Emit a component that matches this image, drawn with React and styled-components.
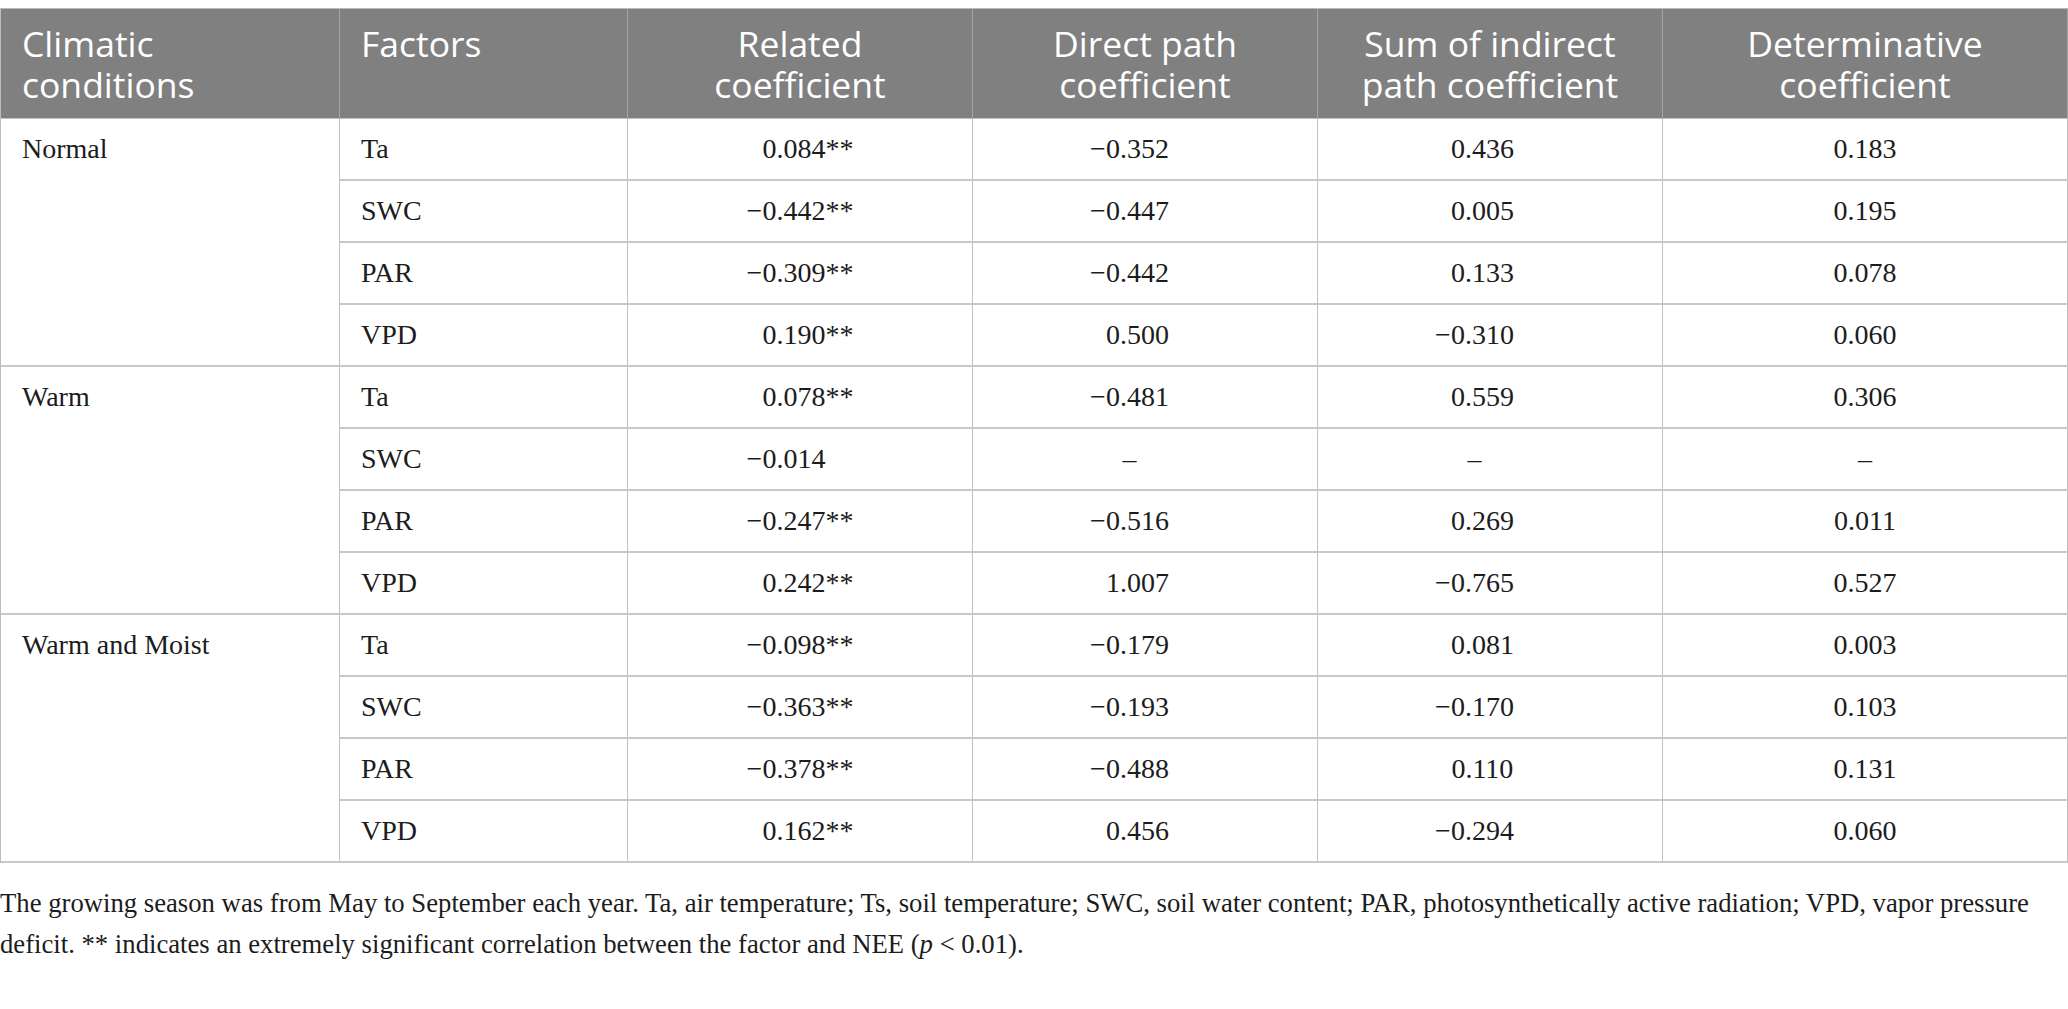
import styled, { createGlobalStyle } from "styled-components";

const GlobalStyle = createGlobalStyle`
  html, body {
    margin: 0;
    padding: 0;
    background: #fff;
  }
`;

const Page = styled.div`
  padding-top: 8px;
  width: 2068px;
`;

const Table = styled.div`
  display: grid;
  grid-template-columns: 339px 288px 345px 345px 345px 405px;
  grid-template-rows: 110px repeat(12, 62px);
  border-top: 1px solid #b9b9b9;
  border-left: 1px solid #bdbdbd;
  font-family: "Liberation Serif", "Times New Roman", serif;
  font-size: 28px;
  color: #1c1c1c;
`;

const HeadCell = styled.div`
  box-sizing: border-box;
  background: #7f807f;
  color: #fff;
  font-family: "Open Sans", "Noto Sans", sans-serif;
  font-size: 35.5px;
  line-height: 41px;
  padding: 14px 21px 0;
  text-align: ${(p) => (p.$left ? "left" : "center")};
  border-right: 1px solid #a3a4a3;
  border-bottom: 1px solid #c4c4c4;
`;

const Cell = styled.div`
  box-sizing: border-box;
  display: flex;
  align-items: center;
  justify-content: ${(p) => (p.$left ? "flex-start" : "center")};
  padding: 0 ${(p) => p.$shift || 0}px 0 ${(p) => (p.$left ? 21 : 0)}px;
  border-right: 1px solid #c2c2c2;
  border-bottom: 2px solid #c8c8c8;
  white-space: nowrap;
`;

const GroupCell = styled.div`
  box-sizing: border-box;
  grid-row: span 4;
  padding: 0 21px;
  line-height: 60px;
  border-right: 1px solid #c2c2c2;
  border-bottom: 2px solid #c8c8c8;
`;

const Value = styled.span`
  display: inline-flex;
  white-space: nowrap;
`;

const Sign = styled.span`
  display: inline-block;
  width: 0.564em;
`;

const Stars = styled.span`
  display: inline-block;
  width: 1em;
`;

const Note = styled.p`
  margin: 20px 0 0;
  width: 2045px;
  font-family: "Liberation Serif", "Times New Roman", serif;
  font-size: 26.7px;
  line-height: 41px;
  color: #1c1c1c;
`;

const headers = [
  { label: ["Climatic", "conditions"], left: true },
  { label: ["Factors"], left: true },
  { label: ["Related", "coefficient"] },
  { label: ["Direct path", "coefficient"] },
  { label: ["Sum of indirect", "path coefficient"] },
  { label: ["Determinative", "coefficient"] },
];

const groups = [
  {
    name: "Normal",
    rows: [
      ["Ta", "0.084", "**", "−0.352", "0.436", "0.183"],
      ["SWC", "−0.442", "**", "−0.447", "0.005", "0.195"],
      ["PAR", "−0.309", "**", "−0.442", "0.133", "0.078"],
      ["VPD", "0.190", "**", "0.500", "−0.310", "0.060"],
    ],
  },
  {
    name: "Warm",
    rows: [
      ["Ta", "0.078", "**", "−0.481", "0.559", "0.306"],
      ["SWC", "−0.014", "", "–", "–", "–"],
      ["PAR", "−0.247", "**", "−0.516", "0.269", "0.011"],
      ["VPD", "0.242", "**", "1.007", "−0.765", "0.527"],
    ],
  },
  {
    name: "Warm and Moist",
    rows: [
      ["Ta", "−0.098", "**", "−0.179", "0.081", "0.003"],
      ["SWC", "−0.363", "**", "−0.193", "−0.170", "0.103"],
      ["PAR", "−0.378", "**", "−0.488", "0.110", "0.131"],
      ["VPD", "0.162", "**", "0.456", "−0.294", "0.060"],
    ],
  },
];

function Num({ v, stars, signed, starred }) {
  if (v === "–") return <span>–</span>;
  const neg = v.startsWith("−");
  const abs = neg ? v.slice(1) : v;
  return (
    <Value>
      {signed && <Sign>{neg ? "−" : ""}</Sign>}
      <span>{abs}</span>
      {starred && <Stars>{stars}</Stars>}
    </Value>
  );
}

function RowCells({ row }) {
  const [factor, related, stars, direct, indirect, determ] = row;
  return (
    <>
      <Cell $left style={{ gridColumn: 2 }}>
        {factor}
      </Cell>
      <Cell>
        <Num v={related} stars={stars} signed starred />
      </Cell>
      <Cell $shift={31}>
        <Num v={direct} signed />
      </Cell>
      <Cell $shift={31}>
        <Num v={indirect} signed />
      </Cell>
      <Cell>
        <Num v={determ} />
      </Cell>
    </>
  );
}

export default function App() {
  return (
    <Page>
      <GlobalStyle />
      <Table>
        {headers.map((h) => (
          <HeadCell key={h.label.join(" ")} $left={h.left}>
            {h.label.map((line) => (
              <div key={line}>{line}</div>
            ))}
          </HeadCell>
        ))}
        {groups.map((g) => [
          <GroupCell key={g.name}>{g.name}</GroupCell>,
          ...g.rows.map((r) => <RowCells key={g.name + r[0]} row={r} />),
        ])}
      </Table>
      <Note>
        The growing season was from May to September each year. Ta, air
        temperature; Ts, soil temperature; SWC, soil water content; PAR,
        photosynthetically active radiation; VPD, vapor pressure deficit. **
        indicates an extremely significant correlation between the factor and
        NEE (<i>p</i> &lt; 0.01).
      </Note>
    </Page>
  );
}
